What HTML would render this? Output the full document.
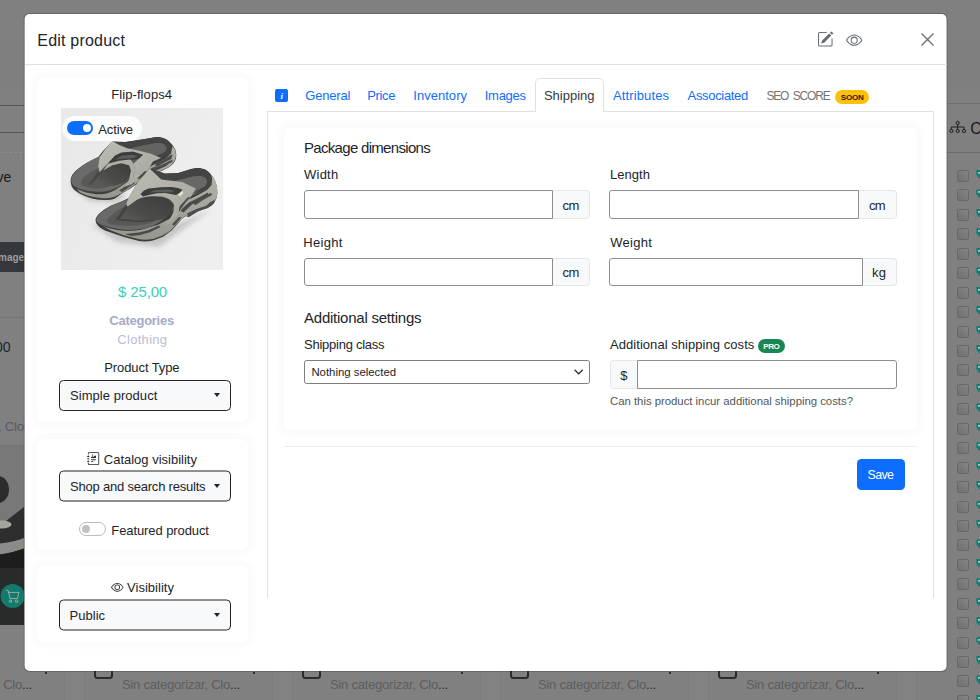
<!DOCTYPE html>
<html lang="en">
<head>
<meta charset="utf-8">
<title>Edit product</title>
<style>
*{box-sizing:border-box;margin:0;padding:0}
html,body{width:980px;height:700px;overflow:hidden}
body{position:relative;background:#808080;font-family:"Liberation Sans",Arial,sans-serif;font-size:13px;color:#212529;line-height:1}
.abs,.t,.bg i,.bg b{position:absolute;display:block}
svg{position:absolute;display:block;overflow:visible}
.t{white-space:nowrap;line-height:1;font-weight:normal;font-size:13px}
button.t{border:0;background:none;padding:0;font-family:inherit}
/* ---------- dimmed page behind modal ---------- */
.bg{position:absolute;left:0;top:0;width:980px;height:700px;overflow:hidden}
.bg .hl{height:1px;left:0;width:24px;background:#555}
.bg .cb{width:12px;height:12px;left:957px;border:1px solid #686868;border-radius:1.5px;background:linear-gradient(225deg,#848484,#707070)}
.bg .tg{left:976.4px;width:5px;height:8.5px;background:radial-gradient(circle at 2.9px 2.8px,#9cc4bd 0 .8px,#0e7f70 1.1px);clip-path:polygon(0 0,100% 0,100% 100%,60% 100%,0 60%)}
.bg .pc{top:660px;width:19px;height:18.5px;border:2px solid #2b2b2b;border-radius:3.5px}
.bg .dot{margin-left:.6px;top:672px;width:2px;height:2px;background:#151515;border-radius:1px}
.bg .gap{top:655px;width:21px;height:45px;background:#828282;border-left:1px solid #7d7d7d;border-right:1px solid #7d7d7d}
.bg .cat{top:677.6px;font-size:13px;color:#5e5e5e}
.bg .cat em{font-style:normal;color:#2a2a2a}
/* ---------- modal ---------- */
.modal{position:absolute;left:24px;top:13px;width:924px;height:659px;transform:translateX(-.4px);background:#fff;background-clip:padding-box;border:1px solid rgba(0,0,0,.2);border-radius:6px}
.mhead{position:absolute;left:24.5px;top:14px;width:922px;height:51px;border-bottom:1px solid #dee2e6}
.card{position:absolute;background:#fff;border-radius:6px;box-shadow:0 0 9px 3px rgba(60,60,90,.035)}
.sel{position:absolute;left:59px;width:172px;height:31px;border:1px solid #212529;border-radius:4.5px;background:#f8f9fa}
.caret{position:absolute;left:213.6px;width:0;height:0;border-left:3.5px solid transparent;border-right:3.5px solid transparent;border-top:4px solid #212529}
.lnk{color:#0d6efd}
.inp{position:absolute;height:28.5px;background:#fff;border:1px solid #8e8e8e;border-radius:3px 0 0 3px}
.add{position:absolute;height:28.5px;background:#f8f9fa;border:1px solid #e4e7ea;border-left:0;border-radius:0 4px 4px 0}
.sw{position:absolute;width:26px;height:13px;border-radius:6.5px}
.sw::after{content:"";position:absolute;top:50%;margin-top:-4.9px;width:9.8px;height:9.8px;border-radius:50%}
.sw.on{width:26.4px;height:13.6px;border-radius:7px;background:#0d6efd}.sw.on::after{right:2.2px;background:#fff;margin-top:-4.4px;width:8.8px;height:8.8px}
.sw.off{width:26.5px;height:13.5px;border-radius:7px;background:#fff;border:1px solid #bbb}.sw.off::after{left:2.3px;background:#c2c2c2;margin-top:-4px;width:8px;height:8px}
</style>
</head>
<body>
<!-- ================= dimmed page behind the modal ================= -->
<div class="bg">
  <i class="abs" style="left:0;top:37px;width:980px;height:53px;background:#7e7f7e"></i>
  <i class="hl" style="top:105px"></i>
  <i class="hl" style="top:132px"></i>
  <i class="abs" style="left:0;top:152px;width:24px;height:1px;background:repeating-linear-gradient(90deg,#8c8c8c 0 2.4px,transparent 2.4px 4.8px)"></i>
  <span class="t" style="right:968.6px;top:169.6px;font-size:14px;color:#161616">Active</span>
  <i class="abs" style="left:0;top:242px;width:24px;height:30px;background:#34383c"></i>
  <span class="t" style="right:952.5px;top:252.6px;font-size:10px;font-weight:bold;color:#9c9c9c">Image:</span>
  <i class="hl" style="top:317px;background:#767676"></i>
  <span class="t" style="right:969.5px;top:340.2px;font-size:14px;color:#1b2533">25,00</span>
  <span class="t" style="left:-2px;top:419.7px;font-size:13px;letter-spacing:-.2px;color:#555b66">, Clothing</span>
  <!-- product thumbnail on the page -->
  <i class="abs" style="left:0;top:446px;width:24px;height:179px;background:#787878"></i>
  <i class="hl" style="top:445px;background:#747474"></i>
  <svg style="left:0;top:446px" width="24" height="179" viewBox="0 446 24 179">
    <g style="filter:blur(.5px)">
    <ellipse cx="-2" cy="489.5" rx="11" ry="13.5" fill="#2c2c2c"/>
    <path d="M24 507 L6 521 L0 523 V625 H24Z" fill="#2e2e2e"/>
    <ellipse cx="2" cy="524.5" rx="9.5" ry="4" fill="#a3a39f"/>
    <path d="M0 543.5 C10 542.5 18 540.5 24 538 V548.5 C16 551.5 8 553.5 0 554.5Z" fill="#8b8b87"/>
    <path d="M0 554.5 C8 553.5 16 551.5 24 548.5 V568 H0Z" fill="#1d1d1d"/>
    </g>
    <rect x="0" y="568" width="24" height="56.5" fill="#292b2b"/>
    <circle cx="12.6" cy="596" r="12" fill="#137b6d"/>
    <g fill="none" stroke="#bdb6a8" stroke-width="0.8" stroke-linecap="round" stroke-linejoin="round">
      <path d="M6.6 590.4h1.6l1.7 8.2h7.6l1.4-6.2H8.6"/>
      <circle cx="10.5" cy="601.3" r="1.2"/><circle cx="16.5" cy="601.3" r="1.2"/>
    </g>
  </svg>
  <!-- right column of the page -->
  <i class="abs" style="left:947px;top:103px;width:33px;height:1px;background:#6f6f6f"></i>
  <i class="abs" style="left:947px;top:152px;width:33px;height:1px;background:#6b6b6b"></i>
  <svg style="left:948.8px;top:121px" width="17.4" height="12.4" viewBox="0 0 17.4 12.4" fill="none" stroke="#1e1e1e" stroke-width="1">
    <circle cx="8.7" cy="2" r="1.6"/><circle cx="2.4" cy="10" r="1.6"/><circle cx="8.7" cy="10" r="1.6"/><circle cx="15" cy="10" r="1.6"/>
    <path d="M8.7 3.6v4.8M2.4 8.4V6h12.6v2.4"/>
  </svg>
  <span class="t" style="left:970.2px;top:120.6px;font-size:16px;color:#1a1a1a">Categories</span>
  <i class="cb" style="top:170.0px"></i><i class="tg" style="top:170.0px"></i>
  <i class="cb" style="top:189.4px"></i><i class="tg" style="top:189.4px"></i>
  <i class="cb" style="top:208.9px"></i><i class="tg" style="top:208.9px"></i>
  <i class="cb" style="top:228.3px"></i><i class="tg" style="top:228.3px"></i>
  <i class="cb" style="top:247.8px"></i><i class="tg" style="top:247.8px"></i>
  <i class="cb" style="top:267.2px"></i><i class="tg" style="top:267.2px"></i>
  <i class="cb" style="top:286.6px"></i><i class="tg" style="top:286.6px"></i>
  <i class="cb" style="top:306.1px"></i><i class="tg" style="top:306.1px"></i>
  <i class="cb" style="top:325.5px"></i><i class="tg" style="top:325.5px"></i>
  <i class="cb" style="top:345.0px"></i><i class="tg" style="top:345.0px"></i>
  <i class="cb" style="top:364.4px"></i><i class="tg" style="top:364.4px"></i>
  <i class="cb" style="top:383.8px"></i><i class="tg" style="top:383.8px"></i>
  <i class="cb" style="top:403.3px"></i><i class="tg" style="top:403.3px"></i>
  <i class="cb" style="top:422.7px"></i><i class="tg" style="top:422.7px"></i>
  <i class="cb" style="top:442.2px"></i><i class="tg" style="top:442.2px"></i>
  <i class="cb" style="top:461.6px"></i><i class="tg" style="top:461.6px"></i>
  <i class="cb" style="top:481.0px"></i><i class="tg" style="top:481.0px"></i>
  <i class="cb" style="top:500.5px"></i><i class="tg" style="top:500.5px"></i>
  <i class="cb" style="top:519.9px"></i><i class="tg" style="top:519.9px"></i>
  <i class="cb" style="top:539.4px"></i><i class="tg" style="top:539.4px"></i>
  <i class="cb" style="top:558.8px"></i><i class="tg" style="top:558.8px"></i>
  <i class="cb" style="top:578.2px"></i><i class="tg" style="top:578.2px"></i>
  <i class="cb" style="top:597.7px"></i><i class="tg" style="top:597.7px"></i>
  <i class="cb" style="top:617.1px"></i><i class="tg" style="top:617.1px"></i>
  <i class="cb" style="top:636.6px"></i><i class="tg" style="top:636.6px"></i>
  <i class="cb" style="top:656.0px"></i><i class="tg" style="top:656.0px"></i>
  <i class="cb" style="top:675.4px"></i><i class="tg" style="top:675.4px"></i>
  <i class="cb" style="top:694.9px"></i><i class="tg" style="top:694.9px"></i>
  <i class="gap" style="left:-144.5px"></i>
  <i class="pc" style="left:-114px"></i><i class="dot" style="left:44.5px"></i><span class="t cat" id="c0" style="left:-86px;letter-spacing:-0.235px">Sin categorizar, Clo<em>...</em></span>
  <i class="gap" style="left:63.5px"></i>
  <i class="pc" style="left:94px"></i><i class="dot" style="left:252.5px"></i><span class="t cat" id="c1" style="left:122px;letter-spacing:-0.235px">Sin categorizar, Clo<em>...</em></span>
  <i class="gap" style="left:271.5px"></i>
  <i class="pc" style="left:302px"></i><i class="dot" style="left:460.5px"></i><span class="t cat" id="c2" style="left:330px;letter-spacing:-0.235px">Sin categorizar, Clo<em>...</em></span>
  <i class="gap" style="left:479.5px"></i>
  <i class="pc" style="left:510px"></i><i class="dot" style="left:668.5px"></i><span class="t cat" id="c3" style="left:538px;letter-spacing:-0.235px">Sin categorizar, Clo<em>...</em></span>
  <i class="gap" style="left:687.5px"></i>
  <i class="pc" style="left:718px"></i><i class="dot" style="left:876.5px"></i><span class="t cat" id="c4" style="left:746px;letter-spacing:-0.235px">Sin categorizar, Clo<em>...</em></span>
  <i class="gap" style="left:895.5px"></i>
  
</div>

<!-- ================= modal ================= -->
<div class="modal"></div>
<div class="mhead"></div>
<h5 class="t" id="t1" style="left:37.3px;top:32.5px;font-size:16px;letter-spacing:0.210px">Edit product</h5>
<svg style="left:816.9px;top:31px" width="16.600" height="16.600" viewBox="0 0 16 16" fill="#666d74"><path d="M15.502 1.94a.5.5 0 0 1 0 .706L14.459 3.69l-2-2L13.502.646a.5.5 0 0 1 .707 0l1.293 1.293zm-1.75 2.456-2-2L4.939 9.21a.5.5 0 0 0-.121.196l-.805 2.414a.25.25 0 0 0 .316.316l2.414-.805a.5.5 0 0 0 .196-.12l6.813-6.814z"/><path fill-rule="evenodd" d="M1 13.500A1.500 1.500 0 0 0 2.500 15h11a1.500 1.500 0 0 0 1.500-1.500v-6a.5.5 0 0 0-1 0v6a.5.5 0 0 1-.5.5h-11a.5.5 0 0 1-.5-.5v-11a.5.5 0 0 1 .5-.5H9a.5.5 0 0 0 0-1H2.500A1.500 1.500 0 0 0 1 2.500v11z"/></svg>
<svg style="left:846.1px;top:31.5px" width="16.400" height="16.400" viewBox="0 0 16 16" fill="#666d74"><path d="M16 8s-3-5.500-8-5.500S0 8 0 8s3 5.500 8 5.500S16 8 16 8zM1.173 8a13.133 13.133 0 0 1 1.660-2.043C4.120 4.668 5.880 3.500 8 3.500c2.120 0 3.879 1.168 5.168 2.457A13.133 13.133 0 0 1 14.828 8c-.058.087-.122.183-.195.288-.335.480-.830 1.120-1.465 1.755C11.879 11.332 10.119 12.500 8 12.500c-2.120 0-3.879-1.168-5.168-2.457A13.134 13.134 0 0 1 1.172 8z"/><path d="M8 5.500a2.500 2.500 0 1 0 0 5 2.500 2.500 0 0 0 0-5zM4.500 8a3.500 3.500 0 1 1 7 0 3.500 3.500 0 0 1-7 0z"/></svg>
<svg style="left:920.7px;top:32.5px" width="13" height="13" viewBox="0 0 13 13" fill="none" stroke="#6b6b6b" stroke-width="1.3"><path d="M.5.5l12 12M12.500.5l-12 12"/></svg>

<!-- ---------- left column ---------- -->
<div class="card" style="left:37px;top:78px;width:211px;height:344px"></div>
<div class="card" style="left:37px;top:438.5px;width:211px;height:111.5px"></div>
<div class="card" style="left:37px;top:566px;width:211px;height:76px"></div>

<span class="t" id="t2" style="left:111.3px;top:88px;letter-spacing:0.073px">Flip-flops4</span>
<!--SANDAL-START--><svg style="left:61px;top:108px" width="162" height="162" viewBox="0 0 162 162">
  <defs>
    <linearGradient id="bgG" x1="0" y1="0.2" x2="1" y2="0.6"><stop offset="0" stop-color="#e9e9e9"/><stop offset=".5" stop-color="#edecec"/><stop offset="1" stop-color="#f0efef"/></linearGradient>
    <filter id="b3" x="-20%" y="-20%" width="140%" height="140%"><feGaussianBlur stdDeviation="2.6"/></filter>
    <filter id="b1" x="-5%" y="-5%" width="110%" height="110%"><feGaussianBlur stdDeviation="0.6"/></filter>
    <linearGradient id="soleG" x1="0" y1="0" x2="0" y2="1"><stop offset="0" stop-color="#b2b2aa"/><stop offset="1" stop-color="#96968f"/></linearGradient>
    <linearGradient id="strapG" x1="0" y1="0" x2="1" y2="1"><stop offset="0" stop-color="#bcbcb4"/><stop offset="1" stop-color="#a6a69e"/></linearGradient>
    <linearGradient id="shG" x1="1" y1="0" x2="0" y2="1"><stop offset="0" stop-color="#3b3c3a"/><stop offset=".55" stop-color="#484947"/><stop offset="1" stop-color="#5a5b59"/></linearGradient>
    <clipPath id="imgC"><rect width="162" height="162"/></clipPath>
  </defs>
  <g clip-path="url(#imgC)">
  <rect width="162" height="162" fill="url(#bgG)"/>
  <!-- soft ground shadows -->
  <g filter="url(#b3)" fill="#bcbcbc">
    <path d="M7 76 L28 93 L56 95 L66 86 L40 82Z" opacity=".8"/>
    <path d="M30 116 L56 134 L98 139 L132 114 L152 101 L100 122Z" opacity=".8"/>
  </g>
  <g filter="url(#b1)">
  <!-- ===== back sandal ===== -->
  <path d="M9.600 72 C10 66 17 59.500 29.600 52.800 L37.300 48.900 L42.400 42.500 L51.400 33.500 L64 34 L77 32 L90 30 C98 27.500 106 30 110.500 36 C114.500 40 116 45 115 50 C114 55 110 59 101.600 62.400 L88 68 L76 76 L68.600 81 L60.400 85.800 C57 88.500 54 91 51 91.500 C44 92.500 38 92.200 32 90.800 C25 89 19 86.500 15 83.300 C11.500 81 9.500 77 9.600 72Z" fill="#40413f"/>
  <!-- sole side light band -->
  <path d="M16 80.800 C22 84 30 86.300 38.600 86.300 C45 86.300 50 84.500 55 81.500 L66 74 L78 65 L92 57 L104 51 L110 45.500 L111.500 38 C116 43 116 50 112 55 C109 59 104 61 100 62.500 L88 67.500 L76 75 L66 82 L58 86.500 C53 89.500 48 90.600 42 90.200 C32 89.300 24 87.400 18.500 84Z" fill="url(#soleG)"/>
  <!-- grooves in sole -->
  <path d="M93 57.500 L110 47.500 L111 50.500 L97 58Z M86 64 L107 54.500 L106 57.500 L90 65Z M58 82.500 L72 73.500 L74 75 L61 84Z" fill="#4b4c4a"/>
  <!-- footbed top -->
  <path d="M10.200 72 C11 66.500 17 59.500 29.600 52.800 L40 47.500 L52 42 L72 36 L92 32.500 C100 31.500 106 34 108 39 C109 43 107 46 101 48.500 L90 54 L80 61.500 L70 69.500 L60 77 C56 80 51 82 45 83.300 C36 84.500 27 83.500 19.300 81 C14 79 10 76.500 10.200 72Z" fill="#6a6b69"/>
  <!-- footbed inner floor -->
  <path d="M20 73 C23 68 30 63 38 59.500 L50 54 L70 45 L92 37 C98 35.500 103 37 104 40.500 C104 43 101 45.500 96 47.500 L84 53.500 L72 62 L62 70 C56 75 50 78.800 43 80 C35 81 26 80 20 77Z" fill="#595a58"/>
  <!-- deep shadow under strap -->
  <path d="M37.300 63 L42.400 62 L51.400 57 L60.400 55 L68.100 57 L70.500 62.400 L68.500 70 L62 75 L54 77.800 L44 77.500 L38 72Z" fill="url(#shG)"/>
  <path d="M37 63 L39.500 65.500 L33 74 L26 77.500 L31 72Z" fill="#484947"/>
  <!-- heel cup dark rim -->
  <path d="M52 33.800 L64 34.200 L77 32.200 L90 30 C98 27.800 105.500 30 109 36 C111 40 110.500 43.500 108 46 L100 50 L92 52.500 L96 47.500 C102 45.500 105.500 43 105.500 40 C105 36.500 101 34.500 95 35 L80 38 L66 42Z" fill="#434442"/>
  <!-- heel footbed -->
  <path d="M66 41 L82 37.500 L95 35.200 C101 34.800 105 36.800 105.300 40 C105.300 42.800 102 45 96 47.300 L90 49.800 L78 44.500Z" fill="#636462"/>
  <!-- strap opening (dark) -->
  <path d="M46 56 L54 47 L60.400 44 L72 43.200 L83 46.500 L79 50.800 L69.400 52 L57.800 53.300Z" fill="#3c3d3b"/>
  <path d="M54 51.500 L60 48 L70 46.800 L77 47.800 L73 50 L62 50.800Z" fill="#5d5e5c"/>
  <!-- strap: post + upper arm + side panel -->
  <path d="M51.400 32.900 L43.700 41.900 L38.600 49.600 L37.300 58.600 L38.600 64.300 L42.400 59.800 L46.900 55.300 L54 47.600 L60.400 44.400 L72 43.500 L82.300 46.700 L78.400 50.200 L72.500 55.500 L74 62 L72 70 L68 77 L64.300 79 L71 76 L80 68 L88 60 L92 53.500 L100 50 L90 45.700 L77.100 42.500 L66.800 40.600 L57.800 36.700Z" fill="url(#strapG)"/>
  <!-- strap: lower arm -->
  <path d="M42.400 62.400 L46.900 55.700 L57.800 52.800 L69.400 51.500 L72.500 55.500 L74 62 L72 70 L68 77 L64.300 78.500 L68.100 71.400 L70 62.400 L68.100 57.300 L60.400 55.300 L51.400 57.300Z" fill="#aeaea6"/>

  <path d="M94 55.300 L103 51.300 L111 46.300 L111.600 48.300 L104 53.300 L95.500 57.100Z M90 60 L100 57 L111.500 51.500 L111.500 53.800 L101 59.200 L91 62.200Z M76 70.500 L84 63 L86.500 63.500 L79 71Z" fill="#4c4d4b"/>
  <!-- ===== front sandal ===== -->
  <path d="M34.600 112 C35 107.500 40 103 49.600 97.700 L61 93.200 L67.600 90 L76.600 74.600 L88.600 60.500 L104 65.600 L117 65 L130 61 C138 58.500 146 60.500 149.500 66 C153.500 70 156.500 77 156.300 85 C156 91 153.500 95.500 150 98 L144 100.500 L130 104.500 L121 110.800 L110.600 122.500 L102 128.800 L92 132.600 C86 133.800 81 133.600 77 132.800 L62 128.800 L44 122.500 C38 119.500 34.500 116 34.600 112Z" fill="#3b3c3a"/>
  <!-- sole side -->
  <path d="M40 117.300 C46 120 54 122.200 62.400 122.800 C70 123.200 76 122.600 82 121.200 L97 116.800 L110 110 L114 104.500 L119 98.500 L127 92 L137 87 L146 82 L150.500 77 L151 70 L150 67 C155 72 156.800 79 156.300 86 C155.500 92 152 96.500 147 99 L134 103 L124 108 L116 115.500 L109 123 L101 127.800 L92 131 C86 132 81 131.800 77 131 L62 127 L50 122.500Z" fill="url(#soleG)"/>
  <path d="M64 126 L78 124.500 L87 122.300 L98 117.500 L99.500 119 L89 124.300 L79 127 L70 128Z M119 102.500 L128 94.500 L138 89.500 L147 84.500 L147.500 87.500 L139 92.500 L131 96.500 L122.500 104.500Z M125 108.500 L134 102.300 L145 98 L150.500 93 L149 98.500 L137 103.500 L128 109Z M113 107.500 L120 98 L128 90 L124 91 L116 99Z" fill="#494a48"/>
  <!-- footbed top -->
  <path d="M35.200 112 C36 107.500 40.500 103.300 49.600 98.200 L61 93.500 L70 89.500 L88 80 L110 72 L128 67 C138 64 146 66 148.500 71.500 C150 76 148 80 142 83 L128 89 L118 96 L110 104.500 L100 113 C94 117.500 86 120.500 76 121.500 C66 122.500 56 121.500 46 118.500 C39 116.500 35 114.500 35.200 112Z" fill="#696a68"/>
  <path d="M45.500 113 C49 107.500 55 103 63 99 L80 92 L100 84 L125 76 C133 74 140 75 141.500 78 C142 80.500 139 83 133 85.500 L120 91.500 L111 99.500 L102 108 C96 113 88 116.300 78 117.300 C68 118.300 56 117.500 47 115.500Z" fill="#585957"/>
  <path d="M65.500 96.500 L72 91.500 L92 87.500 L107 90.500 L112.500 97 L111 104.500 L104 110.500 C98 112.500 90 113 82 112.500 L66 111 L61 106Z" fill="url(#shG)"/>
  <path d="M64.500 97 L67 99 L60 109.500 L54 113.500 L57 108Z M58 110.500 L78 112.500 L93 111 L93 112.800 L78 114.200 L57 112.500Z" fill="#434442"/>
  <!-- heel cup -->
  <path d="M89 60.800 L104 65.800 L117 65.200 L130 61.200 C138 58.800 146 60.800 149.300 66.500 C151.500 71 151 76 148 79.500 L141 83.500 L134 85.500 L139 81.500 C144 79 146.500 76 146 72.500 C145 68.500 139.500 67 132 68.500 L118 72 L104 76Z" fill="#434442"/>
  <path d="M112 74.500 L124 71 L134 68.500 C140 67.500 145 69 145.800 72.500 C146 75.500 143.500 78.500 138 81 L132 83.500 L121 77Z" fill="#676866"/>
  <!-- strap -->
  <path d="M88.600 60.500 L76.600 74.600 L67.600 90 L65.300 96 L66.500 98.500 L70 96 L76 91.800 C80 89.600 85 88.500 91.300 88.300 L100 88.500 C106 89.200 110.500 92 112.800 96 C113.800 99 113 103 111.500 106 L108 112.500 L104 118 L110 114 L117 106.500 L123.500 97 L129.800 89 L135 80.500 L121 74 L100.300 71.400Z" fill="url(#strapG)"/>
  <path d="M79.500 86 L83 82.500 L87.400 80.500 L100 79.300 L110.600 79.100 L117 80 L121.500 81.700 L118.500 85 L115 87 L104 85 L96 85.300 L88.700 86.800 L82 88.500Z" fill="#3d3e3c"/>
  <path d="M88 84.500 L94 82 L106 81.500 L114 82.500 L110 84.500 L98 84Z" fill="#5a5b59"/>
  <path d="M117 86.500 L121 83 L122.500 85 L119 88.500Z" fill="#e3e3dd"/>
  <path d="M118.500 98.500 L126.500 89.500 L129.500 88.500 L122 98 L117.500 104.500Z M132.500 95.500 L141 89.500 L150 84.800 L151 87 L142 92 L134.500 97.300Z M126 105.500 L136 100.800 L146 97.800 L153 91.800 L153.500 94.500 L147 100 L137 103.300 L127 107.300Z M111 116.500 L118 109 L120.500 109.500 L113.500 117.500Z" fill="#4c4d4b"/>
  </g>
  </g>
</svg>
<!--SANDAL-END-->
<i class="abs" style="left:62px;top:116px;width:80px;height:25px;border-radius:12.5px;background:rgba(255,255,255,.86)"></i>
<i class="sw on" style="left:67.1px;top:121.1px"></i>
<label class="t" id="t3" style="left:98.3px;top:122.6px;letter-spacing:-0.141px">Active</label>
<span class="t" id="t4" style="left:118.1px;top:283.8px;font-size:15px;color:#3ccfb9;letter-spacing:-0.158px">$ 25,00</span>
<span class="t" id="t5" style="left:109.3px;top:313.8px;font-weight:bold;color:#a7a9c8;letter-spacing:-0.256px">Categories</span>
<span class="t" id="t6" style="left:117.3px;top:333.4px;color:#b9bbd7;letter-spacing:0.300px">Clothing</span>
<label class="t" id="t7" style="left:104.3px;top:361px;letter-spacing:-0.098px">Product Type</label>
<div class="sel" style="top:380px"></div><i class="caret" style="top:392.7px"></i>
<span class="t" id="t8" style="left:70px;top:388.8px;letter-spacing:0.045px">Simple product</span>

<svg style="left:86.600px;top:451.900px" width="13" height="13" viewBox="0 0 16 16" fill="#212529"><path d="M7.500 3.750a.75.75 0 1 1-1.500 0 .75.75 0 0 1 1.500 0zm-.861 1.542 1.330.886 1.854-1.855a.25.25 0 0 1 .289-.047L11 4.750V7a.5.5 0 0 1-.5.5h-5A.5.5 0 0 1 5 7v-.5s1.540-1.274 1.639-1.208zM5 9.500a.5.5 0 0 1 .5-.5h5a.5.5 0 0 1 0 1h-5a.5.5 0 0 1-.5-.5zm0 2a.5.5 0 0 1 .5-.5h2a.5.5 0 0 1 0 1h-2a.5.5 0 0 1-.5-.5z"/><path d="M3 0h10a2 2 0 0 1 2 2v12a2 2 0 0 1-2 2H3a2 2 0 0 1-2-2v-1h1v1a1 1 0 0 0 1 1h10a1 1 0 0 0 1-1V2a1 1 0 0 0-1-1H3a1 1 0 0 0-1 1v1H1V2a2 2 0 0 1 2-2z"/><path d="M1 5v-.5a.5.5 0 0 1 1 0V5h.5a.5.5 0 0 1 0 1h-2a.5.5 0 0 1 0-1H1zm0 3v-.5a.5.5 0 0 1 1 0V8h.5a.5.5 0 0 1 0 1h-2a.5.5 0 0 1 0-1H1zm0 3v-.5a.5.5 0 0 1 1 0v.5h.5a.5.5 0 0 1 0 1h-2a.5.5 0 0 1 0-1H1z"/></svg>
<label class="t" id="t9" style="left:103.8px;top:452.8px;letter-spacing:-0.006px">Catalog visibility</label>
<div class="sel" style="top:471px;transform:translateY(-.5px)"></div><i class="caret" style="top:484px"></i>
<span class="t" id="t10" style="left:70px;top:480.4px;letter-spacing:-0.209px">Shop and search results</span>
<i class="sw off" style="left:79px;top:522.3px"></i>
<label class="t" id="t11" style="left:111.3px;top:524.2px;letter-spacing:-0.088px">Featured product</label>

<svg style="left:110.6px;top:580.5px" width="12.6" height="12.6" viewBox="0 0 16 16" fill="#212529"><path d="M16 8s-3-5.500-8-5.500S0 8 0 8s3 5.500 8 5.500S16 8 16 8zM1.173 8a13.133 13.133 0 0 1 1.660-2.043C4.120 4.668 5.880 3.500 8 3.500c2.120 0 3.879 1.168 5.168 2.457A13.133 13.133 0 0 1 14.828 8c-.058.087-.122.183-.195.288-.335.480-.830 1.120-1.465 1.755C11.879 11.332 10.119 12.500 8 12.500c-2.120 0-3.879-1.168-5.168-2.457A13.134 13.134 0 0 1 1.172 8z"/><path d="M8 5.500a2.500 2.500 0 1 0 0 5 2.500 2.500 0 0 0 0-5zM4.500 8a3.500 3.500 0 1 1 7 0 3.500 3.500 0 0 1-7 0z"/></svg>
<label class="t" id="t12" style="left:127px;top:581px;letter-spacing:0.031px">Visibility</label>
<div class="sel" style="top:600px;transform:translateY(-.5px)"></div><i class="caret" style="top:612.5px"></i>
<span class="t" id="t13" style="left:69.6px;top:608.8px;letter-spacing:0.016px">Public</span>

<!-- ---------- tabs ---------- -->
<i class="abs" style="left:266.5px;top:111px;width:667.5px;height:487px;border:1px solid #dee2e6;border-bottom:0"></i>
<i class="abs" style="left:535px;top:78px;width:69px;height:34px;border:1px solid #dee2e6;border-bottom:0;border-radius:5px 5px 0 0;background:#fff"></i>
<span class="abs" style="left:275.2px;top:89.1px;width:13.2px;height:13px;border-radius:2px;background:#0d6efd;color:#fff;font:italic bold 9px/15.4px 'Liberation Serif',serif;text-align:center;text-indent:0;overflow:hidden">i</span>
<a class="t lnk" id="t20" style="left:305.3px;top:89.4px;letter-spacing:-0.208px">General</a>
<a class="t lnk" id="t21" style="left:367.2px;top:89.4px;letter-spacing:-0.331px">Price</a>
<a class="t lnk" id="t22" style="left:413.3px;top:89.4px;letter-spacing:0.027px">Inventory</a>
<a class="t lnk" id="t23" style="left:484.8px;top:89.4px;letter-spacing:-0.288px">Images</a>
<a class="t" id="t24" style="left:543.9px;top:89.4px;color:#343a40;letter-spacing:-0.001px">Shipping</a>
<a class="t lnk" id="t25" style="left:613px;top:89.4px;letter-spacing:0.120px">Attributes</a>
<a class="t lnk" id="t26" style="left:687.6px;top:89.4px;letter-spacing:-0.333px">Associated</a>
<a class="t" id="t27" style="left:766.4px;top:90.1px;font-size:12px;word-spacing:2.5px;color:#757575;letter-spacing:-1.195px">SEO SCORE</a>
<i class="abs" style="left:834.8px;top:90px;width:34.4px;height:13.7px;border-radius:7px;background:#ffc107"></i>
<span class="t" id="t28" style="left:840.7px;top:93.6px;font-size:8px;font-weight:bold;color:#1c1a10;letter-spacing:-0.121px">SOON</span>

<!-- ---------- shipping pane ---------- -->
<div class="card" style="left:283.5px;top:127.5px;width:633.5px;height:302.5px;border-radius:5px"></div>
<h6 class="t" id="t30" style="left:304px;top:140.3px;font-size:15px;letter-spacing:-0.690px">Package dimensions</h6>
<label class="t" id="t31" style="left:304px;top:168px;letter-spacing:0.241px">Width</label>
<label class="t" id="t32" style="left:609.9px;top:168px;letter-spacing:0.067px">Length</label>
<div class="inp" style="left:304px;top:190.2px;width:249px"></div><div class="add" style="left:553px;top:190.2px;width:36.7px"></div>
<div class="inp" style="left:609.3px;top:190.2px;width:249.9px"></div><div class="add" style="left:859.2px;top:190.2px;width:37.5px"></div>
<span class="t" id="t33" style="left:562.6px;top:198.7px;letter-spacing:-0.644px">cm</span>
<span class="t" id="t34" style="left:869px;top:198.7px;letter-spacing:-0.644px">cm</span>
<label class="t" id="t35" style="left:303.3px;top:235.6px;letter-spacing:0.304px">Height</label>
<label class="t" id="t36" style="left:610.3px;top:235.6px;letter-spacing:0.253px">Weight</label>
<div class="inp" style="left:304px;top:257.9px;width:249px"></div><div class="add" style="left:553px;top:257.9px;width:36.7px"></div>
<div class="inp" style="left:609.3px;top:257.9px;width:253.4px"></div><div class="add" style="left:862.7px;top:257.9px;width:34px"></div>
<span class="t" id="t37" style="left:562.6px;top:266.4px;letter-spacing:-0.644px">cm</span>
<span class="t" id="t38" style="left:872.1px;top:266.4px;letter-spacing:0.266px">kg</span>

<h6 class="t" id="t40" style="left:304px;top:310.3px;font-size:15px;letter-spacing:-0.236px">Additional settings</h6>
<label class="t" id="t41" style="left:304px;top:338.2px;letter-spacing:-0.248px">Shipping class</label>
<div class="abs" style="left:304px;top:360px;width:286px;height:23.5px;border:1px solid #7e7e7e;border-radius:2.5px;background:#fff"></div>
<span class="t" id="t42" style="left:311.4px;top:367.2px;font-size:11.4px;letter-spacing:-0.011px">Nothing selected</span>
<svg style="left:573.6px;top:369px" width="9.4" height="6" viewBox="0 0 9.4 6" fill="none" stroke="#333" stroke-width="1.3"><path d="M.6.7l4.100 4.100L8.800.7"/></svg>
<label class="t" id="t43" style="left:610px;top:338px;letter-spacing:0.050px">Additional shipping costs</label>
<i class="abs" style="left:757.9px;top:339px;width:26.8px;height:13.5px;border-radius:7px;background:#198754"></i>
<span class="t" id="t44" style="left:763.3px;top:342.6px;font-size:8px;font-weight:bold;color:#fff;letter-spacing:-0.472px">PRO</span>
<div class="add" style="left:609.7px;top:360.2px;width:27.5px;border:1px solid #e4e7ea;border-right:0;border-radius:4px 0 0 4px"></div>
<div class="inp" style="left:636.9px;top:360.2px;width:260px;border-radius:0 3px 3px 0"></div>
<span class="t" id="t45" style="left:620.3px;top:368.5px;letter-spacing:-0.234px">$</span>
<small class="t" id="t46" style="left:610px;top:395.8px;font-size:11.4px;color:#51575d;letter-spacing:-0.030px">Can this product incur additional shipping costs?</small>

<i class="abs" style="left:283.5px;top:446px;width:633.5px;height:1px;background:#ededed"></i>
<i class="abs" style="left:857px;top:459.3px;width:47.6px;height:30.5px;border-radius:4.5px;background:#0d6efd"></i>
<button class="t" id="t47" style="left:867.5px;top:469.2px;font-size:12.4px;color:#fff;letter-spacing:-0.583px">Save</button>
</body>
</html>
